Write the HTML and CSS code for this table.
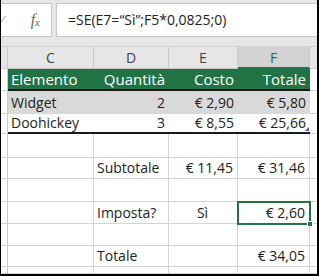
FILE: index.html
```html
<!DOCTYPE html>
<html lang="it">
<head>
<meta charset="utf-8">
<link rel="stylesheet" href="styles.css">
</head>
<body>
<div class="frame">
  <div class="fbar">
    <div class="namebox">
      <svg class="check" width="8" height="10" viewBox="0 0 8 10"><path d="M-4 5 L-1 8 L5 1" fill="none" stroke="#bdbdbd" stroke-width="1.3"/></svg>
      <span class="fx">f<sub>x</sub></span>
    </div>
    <div class="formula">=SE(E7=“Sì”;F5*0,0825;0)</div>
  </div>
  <div class="sheet">
    <div class="rh hdr"></div>
    <div class="ch">C</div>
    <div class="ch">D</div>
    <div class="ch">E</div>
    <div class="ch sel">F</div>
    <div class="ch last"></div>

    <div class="rh r-th"></div>
    <div class="c th">Elemento</div>
    <div class="c th num">Quantità</div>
    <div class="c th num">Costo</div>
    <div class="c th num">Totale</div>
    <div class="c g r-th"></div>

    <div class="rh r-w"></div>
    <div class="c band">Widget</div>
    <div class="c band num">2</div>
    <div class="c band num">€ 2,90</div>
    <div class="c band num">€ 5,80</div>
    <div class="c g r-w"></div>

    <div class="rh r-d"></div>
    <div class="c tb">Doohickey</div>
    <div class="c tb num">3</div>
    <div class="c tb num">€ 8,55</div>
    <div class="c tb num corner">€ 25,66<span class="resize"></span></div>
    <div class="c g r-d"></div>

    <div class="rh r1"></div>
    <div class="c r1"></div>
    <div class="c r1"></div>
    <div class="c r1"></div>
    <div class="c r1"></div>
    <div class="c g r1"></div>

    <div class="rh r2"></div>
    <div class="c r2"></div>
    <div class="c r2">Subtotale</div>
    <div class="c r2 num">€ 11,45</div>
    <div class="c r2 num">€ 31,46</div>
    <div class="c g r2"></div>

    <div class="rh r3"></div>
    <div class="c r3"></div>
    <div class="c r3"></div>
    <div class="c r3"></div>
    <div class="c r3"></div>
    <div class="c g r3"></div>

    <div class="rh r4"></div>
    <div class="c r4"></div>
    <div class="c r4">Imposta?</div>
    <div class="c r4 ctr">Sì</div>
    <div class="c r4 num active">€ 2,60<span class="handle"></span></div>
    <div class="c g r4"></div>

    <div class="rh r5"></div>
    <div class="c r5"></div>
    <div class="c r5"></div>
    <div class="c r5"></div>
    <div class="c r5"></div>
    <div class="c g r5"></div>

    <div class="rh r6"></div>
    <div class="c r6"></div>
    <div class="c r6">Totale</div>
    <div class="c r6"></div>
    <div class="c r6 num">€ 34,05</div>
    <div class="c g r6"></div>

    <div class="rh r7"></div>
    <div class="c r7"></div>
    <div class="c r7"></div>
    <div class="c r7"></div>
    <div class="c r7"></div>
    <div class="c g r7"></div>
  </div>
</div>
</body>
</html>
```

FILE: styles.css
```css
* { box-sizing: border-box; }
html, body { margin: 0; padding: 0; background: #000; }
body { width: 319px; height: 276px; overflow: hidden; }

.frame {
  width: 316px;
  height: 274px;
  margin-left: 1px;
  background: #fff;
  font-family: "Open Sans", "Noto Sans", sans-serif;
  color: #222;
  display: flex;
  flex-direction: column;
  overflow: hidden;
}

.fbar {
  height: 47px;
  background: #e6e6e6;
  display: flex;
  align-items: flex-start;
  padding-top: 3px;
  gap: 4px;
  border-bottom: 1px solid #d0d0d0;
}
.namebox {
  width: 51px;
  height: 34px;
  background: #fff;
  border: 1px solid #c8c8c8;
  border-left: none;
  position: relative;
  display: flex;
  align-items: center;
  justify-content: flex-end;
  padding-right: 11px;
}
.check {
  position: absolute;
  left: 0;
  top: 11px;
}
.fx {
  font-family: "Liberation Serif", serif;
  font-style: italic;
  font-size: 16px;
  color: #666;
  line-height: 1;
}
.fx sub { font-size: 11px; vertical-align: -1px; }
.formula {
  flex: 1;
  height: 34px;
  background: #fff;
  border: 1px solid #c8c8c8;
  border-right: none;
  padding-left: 11px;
  font-size: 14px;
  line-height: 32px;
  color: #222;
  white-space: nowrap;
}

.sheet {
  display: grid;
  grid-template-columns: 7px 86px 75px 69px 72px 1fr;
  grid-template-rows: 22px 22px 23px 20px 24px 21px 23px 22px 22px 21px 1fr;
  flex: 1;
  font-size: 14px;
}
.sheet > div { white-space: nowrap; }

.rh { border-right: 1px solid #c8c8c8; border-bottom: 1px solid #d4d4d4; background: #fff; }
.rh.hdr { background: #e6e6e6; border-bottom: 1px solid #c8c8c8; }

.ch {
  background: #e6e6e6;
  border-right: 1px solid #c8c8c8;
  border-bottom: 1px solid #c8c8c8;
  text-align: center;
  color: #444;
  line-height: 21px;
  font-size: 14px;
}
.ch.sel { background: #d2d2d2; border-bottom: 2px solid #217346; color: #217346; }
.ch.last { border-right: none; }

.c {
  border-right: 1px solid #d4d4d4;
  border-bottom: 1px solid #d4d4d4;
  padding: 0 4px 0 3px;
  line-height: 20px;
  display: flex;
  align-items: center;
  overflow: visible;
}
.c.g { border-right: none; }
.num { justify-content: flex-end; }
.ctr { justify-content: center; }

.th {
  background: #217346;
  color: #fff;
  border-right: none;
  border-bottom: 2px solid #1a1a1a;
  font-size: 15px;
}
.c.g.r-th { border-bottom: 1px solid #d4d4d4; }
.rh.r-th { border-bottom: 1px solid #d4d4d4; }

.band { background: #d9d9d9; border-right: none; border-bottom: none; }
.tb { border-right: none; border-bottom: 2px solid #1a1a1a; }
.rh.r-d, .c.g.r-d { border-bottom: 1px solid #d4d4d4; }

.corner { position: relative; }
.resize {
  position: absolute;
  right: 1px;
  bottom: 1px;
  width: 0;
  height: 0;
  border-left: 4px solid transparent;
  border-bottom: 4px solid #3b5fc0;
}

.active {
  position: relative;
  outline: 2px solid #217346;
  outline-offset: -1px;
  z-index: 1;
}
.handle {
  position: absolute;
  right: -4px;
  bottom: -4px;
  width: 6px;
  height: 6px;
  background: #217346;
  border: 1px solid #fff;
}
```
